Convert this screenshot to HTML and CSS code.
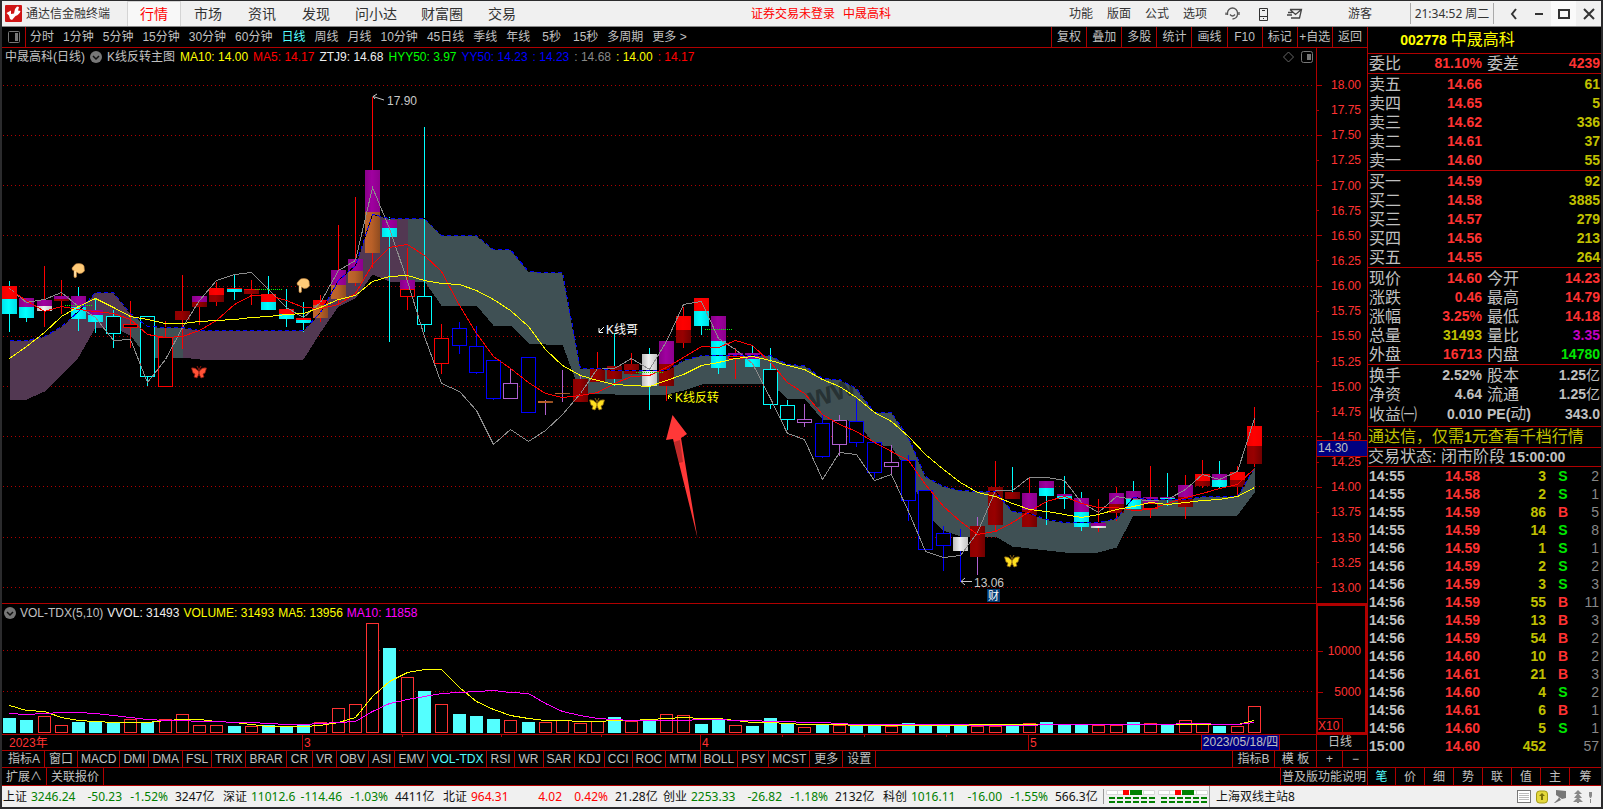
FILE: index.html
```html
<!DOCTYPE html>
<html lang="zh-CN">
<head>
<meta charset="utf-8">
<title>通达信金融终端</title>
<link rel="stylesheet" href="styles.css">
</head>
<body>
<div class="window">
  <header class="titlebar">
    <svg class="logo" viewBox="0 0 17 17" aria-hidden="true"><rect width="17" height="17" rx="1" fill="#cf1515"/><path d="M1.500 8L6 5.500V9L9 8.500L10 4L12 1.500L14 2L13 5.500L15.500 6Q14.500 9.500 10.500 11L7 15L5 14L4 10.500Z" fill="#fff"/></svg>
    <span class="brand">通达信金融终端</span>
    <nav class="menu">
      <button class="on">行情</button><button>市场</button><button>资讯</button><button>发现</button><button class="wide">问小达</button><button class="wide">财富圈</button><button>交易</button>
    </nav>
    <div class="account"><span>证券交易未登录</span><span>中晟高科</span></div>
    <div class="tools">
      <button>功能</button><button>版面</button><button>公式</button><button>选项</button>
      <button aria-label="客服"><svg width="15" height="15" viewBox="0 0 15 15" fill="none" stroke="#555" stroke-width="1.300"><path d="M2.500 9V7A5 5 0 0 1 12.500 7V8.500Q12 12.500 7.500 13M1 6.500V9M14 6V9M5 8.500Q7.500 11.500 10 8.500"/></svg></button>
      <button aria-label="手机"><svg width="11" height="14" viewBox="0 0 11 14" fill="none" stroke="#333"><path d="M1.500 1.500H9.500V13.500H1.500ZM1.500 9.500H9.500M4 3.500H7M5 11.500H6"/></svg></button>
      <button aria-label="邮件"><svg width="16" height="12" viewBox="0 0 16 12" fill="none" stroke="#444" stroke-width="1.300"><path d="M3 1.500H14.500L12.500 10H4M3 1.500L8.500 6.500L14.500 1.500M1 4.500H5M0 7H5"/></svg></button>
      <button class="guest">游客</button>
    </div>
    <time class="clock">21:34:52 周二</time>
    <div class="winbtns">
      <button aria-label="返回"><svg width="14" height="14" viewBox="0 0 14 14"><path d="M9 2L5 7L9 12" /></svg></button>
      <button aria-label="最小化"><svg width="14" height="14" viewBox="0 0 14 14"><path d="M3 7H11"/></svg></button>
      <button aria-label="最大化" class="max"><svg width="14" height="14" viewBox="0 0 14 14"><path d="M2 3H12V11H2Z"/></svg></button>
      <button aria-label="关闭"><svg width="14" height="14" viewBox="0 0 14 14"><path d="M2 2L12 12M12 2L2 12"/></svg></button>
    </div>
  </header>

  <main class="main">
    <section class="left">
      <div class="periods">
        <button class="panelbtn" aria-label="侧栏"><svg width="12" height="12" viewBox="0 0 12 12"><rect x=".5" y=".5" width="11" height="11" rx="1" fill="none" stroke="#777"/><rect x="7" y="2" width="3" height="8" fill="#777"/></svg></button>
        <div class="plist">
          <button>分时</button><button>1分钟</button><button>5分钟</button><button>15分钟</button><button>30分钟</button><button>60分钟</button><button class="on">日线</button><button>周线</button><button>月线</button><button>10分钟</button><button>45日线</button><button>季线</button><button>年线</button><button class="sec">5秒</button><button class="sec">15秒</button><button>多周期</button><button>更多 &gt;</button>
        </div>
        <div class="actions"><button>复权</button><button>叠加</button><button>多股</button><button>统计</button><button>画线</button><button>F10</button><button>标记</button><button>+自选</button><button>返回</button></div>
      </div>

      <div class="pane price">
        <div class="plot">
          <div class="legend">
            <span>中晟高科(日线)</span>
            <svg class="drop" width="12" height="12" viewBox="0 0 12 12"><circle cx="6" cy="6" r="6" fill="#777"/><path d="M3 5L6 8L9 5" fill="none" stroke="#111" stroke-width="1.500"/></svg>
            <span class="near">K线反转主图</span><span class="yellow">MA10: 14.00</span><span class="red">MA5: 14.17</span><span class="white">ZTJ9: 14.68</span><span class="green">HYY50: 3.97</span><span class="blue">YY50: 14.23</span><span class="blue">: 14.23</span><span class="grey">: 14.68</span><span class="yellow">: 14.00</span><span class="red">: 14.17</span>
            <svg class="corner" width="30" height="12" viewBox="0 0 30 12"><path d="M5.500 1L10.500 6L5.500 11L.5 6Z" fill="none" stroke="#666"/><rect x="18.500" y=".5" width="11" height="11" rx="2" fill="none" stroke="#777"/><rect x="24" y="3" width="4" height="6" fill="#777"/></svg>
          </div>
          <svg id="candles" class="canvas" viewBox="2 66 1314 537" role="img" aria-label="日K线图"></svg>
        </div>
        <div class="axis">
          <ol class="scale"><li>18.00</li><li>17.75</li><li>17.50</li><li>17.25</li><li>17.00</li><li>16.75</li><li>16.50</li><li>16.25</li><li>16.00</li><li>15.75</li><li>15.50</li><li>15.25</li><li>15.00</li><li>14.75</li><li>14.50</li><li>14.25</li><li>14.00</li><li>13.75</li><li>13.50</li><li>13.25</li><li>13.00</li></ol>
          <span class="cursor">14.30</span>
        </div>
      </div>

      <div class="pane volume">
        <div class="plot">
          <div class="legend">
            <svg class="drop" width="12" height="12" viewBox="0 0 12 12"><circle cx="6" cy="6" r="6" fill="#777"/><path d="M3 5L6 8L9 5" fill="none" stroke="#111" stroke-width="1.500"/></svg>
            <span class="near">VOL-TDX(5,10)</span><span class="white">VVOL: 31493</span><span class="yellow">VOLUME: 31493</span><span class="yellow">MA5: 13956</span><span class="magenta">MA10: 11858</span>
          </div>
          <svg id="volumes" class="canvas" viewBox="2 621 1314 113" role="img" aria-label="成交量"></svg>
        </div>
        <div class="axis vaxis"><ol class="vscale"><li>10000</li><li>5000</li></ol><span class="unit">X10</span></div>
      </div>

      <div class="dates">
        <svg class="canvas" viewBox="2 735 1314 15" stroke="#b00000" fill="#ff3232" font-size="12"><path d="M302.500 735v15M700.500 735v15M1028.500 735v15M402.500 735v2M501.500 735v2M601.500 735v2M782.500 735v2M864.500 735v2M946.500 735v2"/><g stroke="none"><text x="9" y="747">2023年</text><text x="304" y="747">3</text><text x="702" y="747">4</text><text x="1030" y="747">5</text></g></svg>
        <span class="day">2023/05/18/四</span>
        <span class="cycle">日线</span>
      </div>

      <div class="tabs">
        <button class="roomy">指标A</button><button class="roomy">窗口</button><button>MACD</button><button>DMI</button><button>DMA</button><button>FSL</button><button>TRIX</button><button>BRAR</button><button class="roomy">CR</button><button>VR</button><button>OBV</button><button>ASI</button><button>EMV</button><button>VOL-TDX</button><button>RSI</button><button class="roomy">WR</button><button>SAR</button><button>KDJ</button><button>CCI</button><button>ROC</button><button>MTM</button><button>BOLL</button><button>PSY</button><button>MCST</button><button class="roomy">更多</button><button class="roomy">设置</button>
        <div class="tabend"><button>指标B</button><button>模 板</button><button>+</button><button>−</button></div>
      </div>
      <div class="extra"><button>扩展∧</button><button>关联报价</button><button class="help">普及版功能说明</button></div>
    </section>

    <aside class="side">
      <h1 class="stock">002778 <span>中晟高科</span></h1>
      <table class="quote ratio"><tr><th>委比</th><td class="r">81.10%</td><th>委差</th><td class="r">4239</td></tr></table>
      <table class="quote">
        <tr><th>卖五</th><td class="r">14.66</td><td></td><td class="y">61</td></tr>
        <tr><th>卖四</th><td class="r">14.65</td><td></td><td class="y">5</td></tr>
        <tr><th>卖三</th><td class="r">14.62</td><td></td><td class="y">336</td></tr>
        <tr><th>卖二</th><td class="r">14.61</td><td></td><td class="y">37</td></tr>
        <tr><th>卖一</th><td class="r">14.60</td><td></td><td class="y">55</td></tr>
      </table>
      <table class="quote">
        <tr><th>买一</th><td class="r">14.59</td><td></td><td class="y">92</td></tr>
        <tr><th>买二</th><td class="r">14.58</td><td></td><td class="y">3885</td></tr>
        <tr><th>买三</th><td class="r">14.57</td><td></td><td class="y">279</td></tr>
        <tr><th>买四</th><td class="r">14.56</td><td></td><td class="y">213</td></tr>
        <tr><th>买五</th><td class="r">14.55</td><td></td><td class="y">264</td></tr>
      </table>
      <table class="quote">
        <tr><th>现价</th><td class="r">14.60</td><th>今开</th><td class="r">14.23</td></tr>
        <tr><th>涨跌</th><td class="r">0.46</td><th>最高</th><td class="r">14.79</td></tr>
        <tr><th>涨幅</th><td class="r">3.25%</td><th>最低</th><td class="r">14.18</td></tr>
        <tr><th>总量</th><td class="y">31493</td><th>量比</th><td class="m">3.35</td></tr>
        <tr><th>外盘</th><td class="r">16713</td><th>内盘</th><td class="g">14780</td></tr>
      </table>
      <table class="quote basics">
        <tr><th>换手</th><td>2.52%</td><th>股本</th><td>1.25<i>亿</i></td></tr>
        <tr><th>净资</th><td>4.64</td><th>流通</th><td>1.25<i>亿</i></td></tr>
        <tr><th>收益㈠</th><td>0.010</td><th><b>PE(</b>动<b>)</b></th><td>343.0</td></tr>
      </table>
      <a class="promo" href="#level2">通达信，仅需<b>1</b>元查看千档行情</a>
      <p class="state">交易状态: 闭市阶段 <b>15:00:00</b></p>
      <table class="ticks">
        <tr><td>14:55</td><td>14.58</td><td>3</td><td class="g">S</td><td>2</td></tr>
        <tr><td>14:55</td><td>14.58</td><td>2</td><td class="g">S</td><td>1</td></tr>
        <tr><td>14:55</td><td>14.59</td><td>86</td><td class="r">B</td><td>5</td></tr>
        <tr><td>14:55</td><td>14.59</td><td>14</td><td class="g">S</td><td>8</td></tr>
        <tr><td>14:56</td><td>14.59</td><td>1</td><td class="g">S</td><td>1</td></tr>
        <tr><td>14:56</td><td>14.59</td><td>2</td><td class="g">S</td><td>2</td></tr>
        <tr><td>14:56</td><td>14.59</td><td>3</td><td class="g">S</td><td>3</td></tr>
        <tr><td>14:56</td><td>14.59</td><td>55</td><td class="r">B</td><td>11</td></tr>
        <tr><td>14:56</td><td>14.59</td><td>13</td><td class="r">B</td><td>3</td></tr>
        <tr><td>14:56</td><td>14.59</td><td>54</td><td class="r">B</td><td>2</td></tr>
        <tr><td>14:56</td><td>14.60</td><td>10</td><td class="r">B</td><td>2</td></tr>
        <tr><td>14:56</td><td>14.61</td><td>21</td><td class="r">B</td><td>3</td></tr>
        <tr><td>14:56</td><td>14.60</td><td>4</td><td class="g">S</td><td>2</td></tr>
        <tr><td>14:56</td><td>14.61</td><td>6</td><td class="r">B</td><td>1</td></tr>
        <tr><td>14:56</td><td>14.60</td><td>5</td><td class="g">S</td><td>1</td></tr>
        <tr><td>15:00</td><td>14.60</td><td>452</td><td></td><td>57</td></tr>
      </table>
      <div class="sidetabs"><button class="on">笔</button><button>价</button><button>细</button><button>势</button><button>联</button><button>值</button><button>主</button><button>筹</button></div>
    </aside>
  </main>

  <footer class="status">
    <div class="index down"><span>上证</span><b>3246.24</b><b>-50.23</b><b>-1.52%</b><em>3247亿</em></div>
    <div class="index down"><span>深证</span><b>11012.6</b><b>-114.46</b><b>-1.03%</b><em>4411亿</em></div>
    <div class="index up"><span>北证</span><b>964.31</b><b>4.02</b><b>0.42%</b><em>21.28亿</em></div>
    <div class="index down"><span>创业</span><b>2253.33</b><b>-26.82</b><b>-1.18%</b><em>2132亿</em></div>
    <div class="index down"><span>科创</span><b>1016.11</b><b>-16.00</b><b>-1.55%</b><em>566.3亿</em></div>
    <svg class="meter" width="106" height="15" viewBox="0 0 106 15"><path d="M.5 0V15" stroke="#999"/><g fill="#fff" stroke="#d8d8d8"><path d="M3.500 1.500H51.500V5.500H3.500ZM55.500 1.500H104.500V5.500H55.500Z"/><path d="M14.500 1.500V5.500M40.500 1.500V5.500M66.500 1.500V5.500M93.500 1.500V5.500"/></g><path d="M20 1h6v5h-6zM72 1h6v5h-6z" fill="#f00"/><path d="M27 1h12v5h-12zM79 1h12v5h-12z" fill="#008000"/><path d="M6 9H53M58 9H105M6 13H53M58 13H105" stroke="#008000" stroke-width="2" stroke-dasharray="6 2"/></svg>
    <span class="server">上海双线主站8</span>
    <svg class="tray" width="76" height="15" viewBox="0 0 76 15"><rect x=".5" y="1.500" width="13" height="12" fill="#fff" stroke="#777"/><path d="M2 4.500H12M2 6.500H12M2 8.500H12M2 10.500H12" stroke="#bbb"/><rect x="19.500" y="2" width="11" height="12" rx="3" fill="#e4d83c" stroke="#a39a15"/><path d="M25 4L28 7H26V11H24V7H22Z" fill="#77700b"/><path d="M39 1L49 2V9L45 10L39 6Z M42 8L44 11L38 14H37L41 10Z" fill="#777"/><path d="M61 1L65 5H57ZM61 4L65 9H57ZM61 8L66 13H62V14H60V13H56Z" fill="#888"/><path d="M72 3h3v4l-1 2h-1l-1-2zM73 10h1v4h-1z" fill="#888"/></svg>
  </footer>
</div>
<script src="chart.js"></script>
</body>
</html>
```

FILE: styles.css
```css
* { box-sizing: border-box; }
body { margin: 0; background: #2b2b2d; font-family: "Liberation Sans", "Noto Sans CJK SC", sans-serif; font-size: 12px; line-height: 14px; color: #c0c0c0; }
button { margin: 0; padding: 0; border: 0; background: none; color: inherit; font: inherit; white-space: nowrap; display: flex; align-items: center; justify-content: center; }
.window { margin: 1px 2px 2px; height: calc(100vh - 3px); min-height: 780px; min-width: 1400px; display: flex; flex-direction: column; background: #000; }

.titlebar { height: 26px; flex: none; display: flex; align-items: center; background: #f0f0f0; color: #333; border-bottom: 1px solid #888; padding-left: 3px; }
.logo { width: 17px; height: 17px; flex: none; }
.brand { margin-left: 4px; width: 101px; white-space: nowrap; }
.menu { display: flex; align-self: stretch; font-size: 14px; }
.menu button { width: 54px; }
.menu .wide { width: 66px; }
.menu .on { color: #f00; background: #f8f8f8; border: 1px solid #d4d4d4; border-bottom: 0; }
.account { flex: 1; display: flex; justify-content: center; gap: 8px; color: #f00; padding-left: 44px; white-space: nowrap; }
.tools { display: flex; align-items: center; gap: 14px; }
.tools svg { margin-left: 4px; }
.guest { margin: 0 22px 0 31px; }
.clock { align-self: stretch; margin: 2px 0 2px 16px; width: 84px; display: flex; align-items: center; justify-content: center; border: 1px solid #aaa; border-width: 0 1px; font-family: "Noto Sans", "Noto Sans CJK SC", sans-serif; white-space: nowrap; }
.winbtns { display: flex; align-self: stretch; padding: 0 0 0 7px; }
.winbtns button { width: 25px; }
.winbtns .max { background: #fafafa; }
.winbtns path { fill: none; stroke: #333; stroke-width: 2; }

.main { flex: 1; min-height: 0; display: grid; grid-template-columns: 1fr 233px; border-bottom: 1px solid #b00000; }
.left { display: flex; flex-direction: column; min-width: 0; border-right: 1px solid #b00000; }
.on { color: #54ffff; }

.periods { height: 21px; flex: none; display: flex; border-bottom: 1px solid #b00000; }
.panelbtn { width: 24px; border-right: 1px solid #b00000; }
.plist { display: flex; gap: 9px; padding-left: 4px; flex: 1; }
.plist .sec { padding-left: 3px; }
.actions { width: 316px; display: grid; grid-template-columns: repeat(9, 1fr); }
.actions button { border-left: 1px solid #b00000; }

.pane { display: grid; grid-template-columns: 1fr 51px; border-bottom: 1px solid #b00000; }
.price { flex: 1; min-height: 0; }
.volume { height: 131px; flex: none; }
.plot { display: flex; flex-direction: column; min-width: 0; min-height: 0; }
.canvas { display: block; flex: 1; width: 100%; min-height: 0; }
.legend { height: 18px; flex: none; display: flex; align-items: center; gap: 5px; padding-left: 3px; white-space: nowrap; }
.volume .legend { height: 17px; gap: 4px; padding-left: 2px; }
.corner { margin-left: auto; margin-right: 3px; }
.yellow { color: #ff0; } .red { color: #f00; } .white { color: #eee; } .green { color: #0f0; } .blue { color: #00f; } .grey { color: #888; } .magenta { color: #f0f; }

.axis { border-left: 1px solid #b00000; color: #ff3232; position: relative; }
.scale { list-style: none; margin: 0; padding: 31px 6px 9px 0; height: 100%; display: flex; flex-direction: column; justify-content: space-between; }
.scale li, .vscale li { display: flex; align-items: center; justify-content: space-between; height: 12px; }
.scale li::before, .vscale li::before { content: ""; width: 5px; height: 1px; background: #b00000; }
.scale li:nth-child(even)::before { width: 2px; }
.cursor { position: absolute; left: 0; right: 0; bottom: 146px; height: 17px; line-height: 15px; background: #000080; border: 1px solid #b00000; border-width: 1px 0; color: #c0c0c0; padding-left: 1px; }
.vaxis { border: 2px solid #b00000; display: flex; flex-direction: column; justify-content: space-between; align-items: stretch; }
.vscale { list-style: none; margin: 0; padding: 39px 4px 0 0; display: flex; flex-direction: column; gap: 29px; }
.unit { width: 25px; height: 14px; border: 1px solid #b00000; border-width: 1px 1px 0 0; }

.dates { height: 16px; flex: none; display: grid; grid-template-columns: 1fr 51px; border-bottom: 1px solid #b00000; position: relative; }
.day { position: absolute; left: 1199px; width: 79px; height: 15px; line-height: 15px; background: #000080; border: 1px solid #b00000; border-width: 0 1px; text-align: center; white-space: nowrap; }
.cycle { border-left: 1px solid #b00000; text-align: center; padding-right: 4px; }
.tabs { height: 17px; flex: none; display: flex; border-bottom: 1px solid #b00000; }
.tabs button { padding: 0 3px; border-right: 1px solid #b00000; }
.tabs .roomy { padding: 0 4px; }
.tabs .roomy:first-child { padding: 0 4px 0 6px; }
.tabs button:nth-child(14) { color: #54ffff; }
.tabend { margin-left: auto; width: 135px; display: grid; grid-template-columns: 42px 42px 26px 25px; border-left: 1px solid #b00000; }
.tabend button:last-child { border: 0; }
.extra { height: 17px; flex: none; display: flex; }
.extra button { padding: 0 4px; border-right: 1px solid #b00000; }
.extra .help { margin-left: auto; padding: 0 1px; border-width: 0 0 0 1px; border-left: 1px solid #b00000; }

.side { display: flex; flex-direction: column; min-width: 0; font-size: 16px; }
.stock { margin: 0; height: 27px; flex: none; border-bottom: 1px solid #b00000; text-align: center; color: #ff0; font-size: 14px; line-height: 26px; padding-right: 54px; white-space: nowrap; }
.stock span { font-size: 16px; font-weight: 400; }
.quote { width: 100%; border-collapse: separate; border-spacing: 0; table-layout: fixed; border-bottom: 1px solid #b00000; height: 97px; padding-top: 1px; }
.quote tr { height: 19px; }
.quote th, .quote td { padding: 0; line-height: 19px; white-space: nowrap; }
.quote th { font-weight: 400; text-align: left; padding-left: 1px; }
.quote th:nth-child(3) { padding-left: 4px; }
.quote td { font-size: 14px; font-weight: 700; text-align: right; padding-right: 1px; }
.quote tr > :nth-child(1) { width: 48px; }
.quote tr > :nth-child(2) { width: 67px; }
.quote tr > :nth-child(3) { width: 50px; }
.quote b { font-size: 14px; }
.quote i { font-style: normal; font-weight: 400; font-size: 14px; }
.ratio { height: 20px; padding-top: 0; }
.basics { height: 61px; padding: 1px 0 2px; }
.r { color: #ff3232; } .y { color: #c0c000; } .m { color: #c000c0; } .g { color: #00e600; }
.promo { display: block; height: 21px; flex: none; line-height: 19px; color: #c0c000; border-bottom: 1px solid #b00000; text-decoration: none; white-space: nowrap; }
.promo b, .state b { font-size: 14px; }
.state { margin: 0; height: 19px; flex: none; line-height: 17px; border-bottom: 1px solid #b00000; white-space: nowrap; }
.ticks { width: 100%; border-spacing: 0; table-layout: fixed; font-size: 14px; font-weight: 700; text-align: right; }
.ticks td { padding: 0; height: 18px; line-height: 18px; }
.ticks td:nth-child(1) { width: 46px; text-align: left; padding-left: 1px; }
.ticks td:nth-child(2) { width: 66px; color: #ff3232; }
.ticks td:nth-child(3) { width: 66px; color: #c0c000; }
.ticks td:nth-child(4) { width: 34px; text-align: center; }
.ticks td:nth-child(5) { color: #888; font-weight: 400; padding-right: 2px; }
.sidetabs { margin-top: auto; height: 18px; flex: none; display: grid; grid-template-columns: 27fr repeat(6, 29fr) 32fr; border-top: 1px solid #b00000; font-size: 12px; }
.sidetabs button + button { border-left: 1px solid #b00000; }

.status { height: 21px; flex: none; display: flex; align-items: center; background: #f0f0f0; color: #111; font-family: "Noto Sans", "Noto Sans CJK SC", sans-serif; padding-left: 1px; white-space: nowrap; }
.index { display: grid; grid-template-columns: 28px 45px 46px 46px 55px; text-align: right; }
.index b, .index em { font-weight: 400; font-style: normal; }
.index b:nth-child(2) { text-align: left; }
.index span { text-align: left; }
.index em { text-align: left; padding-left: 7px; }
.down b { color: #008000; } .up b { color: #f00; }
.server { align-self: stretch; line-height: 21px; border-left: 1px solid #999; padding-left: 6px; }
.tray { margin-left: auto; margin-right: 8px; }
```

FILE: chart.js
```js
const X = i => Math.round(9 + 17.29 * i);
const COLOR = { R: '#ff0000', C: '#00ffff', B: '#0000ff', V: '#b060d0' };

// Each day: wick colour, high, low, then body parts (fill, top, bottom); lower-case parts are hollow.
const days = `C 281 332 R 286 299 C 299 314|C 307 322 P 298 307 C 307 318|R 266 327 P 300 306 W 306 311|R 280 314 P 296 299 D 299 301
C 287 331 P 296 307 C 307 319|C 298 333 P 310 315 C 315 322|C 310 348 c 316 334|R 301 348 r 324 328|C 376 386 c 316 377
R 321 338 r 337 387|R 275 349 D 311 320|R 296 325 P 296 302 D 302 307|R 282 306 R 288 295 D 295 302|C 275 300 R 288 289 C 289 292
R 280 305 R 289 290 D 290 294|C 276 310 R 294 302 C 302 310|C 289 327 R 309 314 C 314 319|C 302 332 R 318 320 C 320 323|R 295 322 R 300 305 O 305 318
R 225 304 P 270 285 O 285 299|R 197 286 P 259 271 O 271 283|R 97 268 P 170 212 O 212 253|C 217 342 P 220 228 C 228 237|R 248 310 P 280 289 r 289 297
C 127 332 c 296 325|R 324 374 r 338 364|B 322 354 b 328 346|B 326 374 b 346 373|B 360 400 b 360 399|V 368 399 v 383 399|B 357 413 b 357 413
V 400 415 O 401 403|V 370 402 O 393 394|V 376 402 D 379 402|R 352 382 D 369 382|C 333 386 D 366 379|R 353 375 D 364 374|C 348 410 W 354 386
R 341 401 P 341 364 D 364 386|R 307 348 R 316 330 D 330 343|C 311 335 R 298 311 C 311 326|C 341 374 P 316 341 C 341 368|R 348 379 P 353 355 r 356 358
C 346 367 P 353 359 C 359 367|C 348 409 c 369 405|C 400 430 c 405 420|V 404 427 v 419 423|B 414 458 b 423 457|V 415 456 v 420 445|B 399 447 b 421 443
B 442 478 b 442 473|V 445 474 v 462 467|B 455 521 b 460 501|B 490 549 b 490 550|B 526 571 b 533 546|B 529 582 W 537 551|V 517 575 D 526 557
R 461 531 D 487 525|C 467 499 D 492 499|R 477 527 P 493 510 D 510 527|C 488 525 P 481 488 C 488 496|C 476 509 P 494 496 C 496 499|C 492 531 P 498 512 C 512 527
R 499 532 P 523 526 W 526 528|R 487 521 P 493 504 D 504 513|C 481 509 P 491 499 C 499 509|R 466 518 P 497 503 r 503 509|C 473 506 P 497 498 C 498 499
R 475 519 P 485 497 D 497 507|R 460 488 R 474 481 D 481 486|C 461 488 P 474 480 C 480 487|R 466 495 R 472 480 D 480 487|R 407 468 R 426 446 D 446 464`.split(/[|\n]/).map(s => s.trim().split(' '));

const upper = [340,340,336,326,311,292,292,313,326,327,327,330,330,330,330,330,330,330,312,280,265,214,218,218,218,235,235,235,249,249,271,272,272,368,368,370,370,370,370,360,355,355,355,355,355,364,365,378,379,388,412,412,437,476,486,490,491,491,511,513,519,522,522,522,518,497,499,499,499,496,496,496,467];
const lower = [399,399,391,375,357,327,327,335,357,357,357,359,359,359,359,359,359,359,332,306,298,274,281,281,281,305,305,305,325,325,343,344,344,393,393,394,394,394,394,390,384,383,383,383,383,398,398,419,419,421,444,446,472,513,530,536,536,536,546,548,550,552,552,552,547,515,516,515,516,515,515,515,492];
const ma10 = [358,346,332,316,306,298,307,316,319,323,323,321,320,319,317,316,314,313,307,299,295,281,276,275,280,283,284,290,299,310,326,349,365,375,380,384,385,386,380,374,365,362,358,356,360,365,369,379,386,397,412,421,436,454,469,482,492,496,503,509,511,514,517,514,509,506,502,504,502,500,499,496,487];
const ma5 = [289,300,311,306,309,311,313,319,334,337,336,330,320,304,295,295,300,307,308,304,293,264,247,244,255,271,305,333,356,368,382,393,397,395,392,383,376,375,367,357,346,347,340,345,362,382,393,414,424,431,442,451,460,484,506,521,534,531,522,511,501,496,503,507,507,510,509,503,497,493,488,484,468];
const ztj = [288,302,299,292,306,317,340,339,382,359,327,300,280,274,272,289,307,317,302,270,260,187,228,281,336,383,391,410,444,429,441,430,414,393,368,368,358,369,341,304,301,338,349,363,398,433,439,479,452,454,480,474,511,551,557,555,532,490,490,477,477,480,502,512,496,499,500,499,489,474,479,471,418];

const pts = (a, from = 0) => a.map((y, k) => `${X(from + k) + .5},${y + .5}`);
const line = (a, color, extra = '') => `<polyline points="${pts(a).join(' ')}" fill="none" stroke="${color}" shape-rendering="crispEdges" ${extra}/>`;
const band = (a, b, color) => `<polygon shape-rendering="crispEdges" fill="${color}" points="${pts(upper.slice(a, b + 1), a).concat(pts(lower.slice(a, b + 1), a).reverse()).join(' ')}"/>`;
const grid = ys => ys.map(y => `<path d="M3 ${y}.5H1314" stroke="#b00000" stroke-dasharray="1 3"/>`).join('');
const grad = (id, a, b, c) => `<linearGradient id="${id}"><stop offset="0" stop-color="${a}"/><stop offset=".45" stop-color="${b}"/><stop offset="1" stop-color="${c}"/></linearGradient>`;

let s = '<defs>' + grad('fC', '#00e4ee', '#00ffff', '#00dce6') + grad('fP', '#880088', '#a000a0', '#8c008c') + grad('fD', '#900000', '#980000', '#700000')
  + grad('fO', '#c0662e', '#b86028', '#904c20') + grad('fW', '#bdbdbd', '#f0f0f0', '#c4c4c4') + grad('fR', '#f00000', '#ff0000', '#f40000') + '</defs>';
s += grid([85, 135, 185, 235, 286, 336, 386, 436, 486, 537, 587]);
s += band(0, 7, '#523852') + band(7, 10, '#3f5054') + band(10, 23, '#523852') + band(23, 72, '#3f5054');
s += '<text x="812" y="409" transform="rotate(-19 812 409)" font-size="31" font-weight="700" fill="#000" fill-opacity=".4">ww.</text>';

days.forEach((d, i) => {
  const x = X(i), parts = d.slice(3);
  s += `<path d="M${x + .5} ${d[1]}V${d[2]}" stroke="${COLOR[d[0]]}"/>`;
  for (let k = 0; k < parts.length; k += 3) {
    const f = parts[k], t = +parts[k + 1], h = Math.max(1, parts[k + 2] - t);
    s += f === f.toLowerCase()
      ? `<rect x="${x - 6.5}" y="${t + .5}" width="14" height="${Math.max(2, h - 1)}" fill="#000" stroke="${COLOR[f.toUpperCase()]}"/>`
      : `<rect x="${x - 7}" y="${t}" width="15" height="${h}" fill="url(#f${f})"/>`;
  }
});

s += line(ztj, '#8c8c8c') + line(upper, '#000') + line(upper, '#0000ff', 'stroke-dasharray="4 3"') + line(ma5, '#ff0000') + line(ma10, '#ffff00');
s += '<path d="M65 305.500H92M255 289.500H282M636 372.500H663M705 329.500H732" stroke="#00ff00" stroke-dasharray="1 1"/>';

const hand = (x, y) => `<g transform="translate(${x} ${y})"><path d="M1 5L4 1.500Q5 .5 8 .5Q12 .5 13 3L13.500 8Q11 11 8 10.500L5.500 9V14Q4 15.500 3 14V7.500Q1 8 1 5Z" fill="#ffcb78" stroke="#c28340" stroke-width=".6"/><path d="M4 8V13" stroke="#fff0c8"/></g>`;
const butterfly = (x, y, a, b) => `<g transform="translate(${x} ${y})"><path d="M7.500 5Q4 1 .5 2L2 7L4 8L3 11L6 12L8 8L10 12L13 11L12 8L14 7L15.500 2Q11 1 8.500 5Z" fill="${a}" stroke="${b}" stroke-width=".7"/><path d="M8 10V4L6 0M8 4L10 0" fill="none" stroke="${b}"/></g>`;
s += hand(71, 263) + hand(296, 278) + butterfly(191, 366, '#ff5236', '#8c1a10') + butterfly(589, 398, '#ffe020', '#8c6410') + butterfly(1004, 555, '#ffe020', '#8c6410');

s += '<polygon points="672.500,415 687,434 681,438 697.500,538 673,439 666,440" fill="#ff3838"/><path d="M674 442L680 440L683 462L679 463Z" fill="#000" fill-opacity=".25"/>';
s += `<g font-size="12" fill="#c8c8c8"><text x="387" y="105">17.90</text><text x="974" y="587">13.06</text>
<g fill="none" stroke="#c8c8c8"><path d="M373 96.500L384 100M377 94L373 96.500L375 99M961 581.500H972M965 578L961 581.500L965 585"/><path stroke="#fff" d="M604 327L599 332M599 328V332.500H603"/><path stroke="#ff0" d="M672 399L668 395M668.500 399V395H672"/></g>
<text x="606" y="334" fill="#fff">K线哥</text><text x="675" y="402" fill="#ff0">K线反转</text>
<rect x="987" y="589" width="13" height="13" fill="#003a72"/><text x="988" y="600" fill="#fff" font-size="11">财</text></g>`;
document.getElementById('candles').innerHTML = s;

// Volume: colour and top of every bar, measured in the same chart units.
const bars = 'C718 C720 R716 R725 C722 C722 C722 R719 C722 R719 R714 R725 R725 C726 R726 C725 C727 C725 R722 R708 R704 R623 C648 R677 C691 R704 C714 C716 C719 R720 C722 R722 R720 R723 R721 C717 R721 C719 R714 R715 C724 C719 R725 C726 C718 C723 R727 C724 R725 C724 C725 R726 C723 C725 C726 C724 R726 R726 C725 R723 C722 C725 C725 R725 R725 C722 R723 C725 R720 R724 C726 R726 R706'.split(' ');
const v5 = [705,710,711,717,720,721,722,722,722,720,719,719,721,722,724,726,726,726,725,722,717,696,681,672,669,669,687,701,709,715,718,720,720,721,721,720,720,719,718,717,718,718,720,722,722,723,724,724,724,725,725,725,725,725,725,725,724,724,724,724,724,724,724,724,724,724,724,724,724,724,724,724,720];
const v10 = [713,714,713,712,712,713,715,717,719,720,720,721,721,722,722,723,724,724,723,722,721,711,703,699,696,693,692,691,690,692,693,703,711,715,718,719,720,720,720,720,719,719,720,720,721,721,722,722,723,724,724,724,724,724,724,724,725,725,725,725,724,724,724,724,724,724,724,724,723,723,724,724,722];
let v = grid([650, 691]);
bars.forEach((b, i) => {
  const x = X(i), t = +b.slice(1);
  v += b[0] === 'C' ? `<rect x="${x - 6}" y="${t}" width="13" height="${733 - t}" fill="#54ffff"/>`
    : `<rect x="${x - 5.5}" y="${t + .5}" width="12" height="${732 - t}" fill="#000" stroke="#ff3232"/>`;
});
document.getElementById('volumes').innerHTML = v + line(v5, '#ffff00') + line(v10, '#ff00ff');
```
